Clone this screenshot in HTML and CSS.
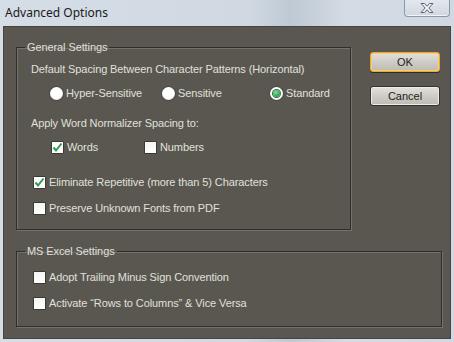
FILE: index.html
```html
<!DOCTYPE html>
<html lang="en">

<head>
    <meta charset="UTF-8">
    <title>Advanced Options</title>
    <link rel="stylesheet" href="styles.css">
</head>

<body>
    <div class="window">
        <div class="titlebar">
            <span class="title">Advanced Options</span>
            <div class="close">
                <svg width="16" height="12" viewBox="0 0 16 12">
                    <path d="M2 1.5h3.5L8 4.3l2.5-2.8H14L9.8 6 14 10.5h-3.5L8 7.7l-2.5 2.8H2L6.2 6z"
                        fill="#f4f6f8" stroke="#5d6670" stroke-width="1" stroke-linejoin="round" />
                </svg>
            </div>
        </div>
        <div class="content">
            <div class="top">
                <fieldset class="group general">
                    <legend>General Settings</legend>
                    <div class="row">Default Spacing Between Character Patterns (Horizontal)</div>
                    <div class="row options r2">
                        <label class="option hyper"><span class="radio"></span>Hyper-Sensitive</label>
                        <label class="option sens"><span class="radio"></span>Sensitive</label>
                        <label class="option"><span class="radio on"></span>Standard</label>
                    </div>
                    <div class="row r3">Apply Word Normalizer Spacing to:</div>
                    <div class="row options boxes r4">
                        <label class="option words"><span class="check on"></span>Words</label>
                        <label class="option"><span class="check"></span>Numbers</label>
                    </div>
                    <div class="row item r5"><span class="check on"></span>Eliminate Repetitive (more than 5) Characters</div>
                    <div class="row item r6"><span class="check"></span>Preserve Unknown Fonts from PDF</div>
                </fieldset>
                <div class="buttons">
                    <button class="btn default">OK</button>
                    <button class="btn">Cancel</button>
                </div>
            </div>
            <fieldset class="group excel">
                <legend>MS Excel Settings</legend>
                <div class="row item"><span class="check"></span>Adopt Trailing Minus Sign Convention</div>
                <div class="row item x2"><span class="check"></span>Activate “Rows to Columns” &amp; Vice Versa</div>
            </fieldset>
        </div>
    </div>
</body>

</html>
```

FILE: styles.css
```css
* {
    margin: 0;
    padding: 0;
    box-sizing: border-box;
}

body {
    width: 454px;
    height: 342px;
    overflow: hidden;
    font-family: "Liberation Sans", Arial, sans-serif;
    font-size: 11px;
    letter-spacing: -0.1px;
}

.window {
    width: 454px;
    height: 342px;
    padding: 0 3px 3px;
    background: linear-gradient(to right, #d5dde6 0%, #d0d9e2 55%, #bfc9d3 64%, #d3dbe4 76%, #d0d9e2 100%);
    display: flex;
    flex-direction: column;
}

.titlebar {
    height: 26px;
    display: flex;
    align-items: flex-start;
    justify-content: space-between;
}

.title {
    font-family: "Noto Sans", sans-serif;
    font-size: 12px;
    letter-spacing: 0;
    color: #1a1a1a;
    margin: 4px 0 0 2px;
}

.close {
    width: 46px;
    height: 17px;
    margin-right: 1px;
    border: 1px solid #8d98a5;
    border-top: none;
    border-radius: 0 0 4px 4px;
    background: linear-gradient(#e3e8ee, #cfd7e0);
    box-shadow: inset 0 -1px 0 #f2f5f8;
    display: flex;
    align-items: center;
    justify-content: center;
}

.content {
    flex: 1;
    border: 1px solid #46453f;
    background: #59574f;
    color: #e0e0dc;
    padding-top: 13px;
}

.top {
    display: flex;
    align-items: flex-start;
}

.group {
    border: 1px solid #2f2e2a;
    box-shadow: 1px 1px 0 #737169, inset 1px 1px 0 #737169;
    margin-left: 12px;
    padding: 7px 0 13px 14px;
}

.group legend {
    margin-left: -6px;
    padding: 0 2px;
    line-height: 14px;
}

.general {
    width: 335px;
}

.excel {
    width: 426px;
    margin-top: 14px;
    padding-top: 11px;
    padding-bottom: 15px;
}

.row {
    display: flex;
    align-items: center;
    height: 16px;
    white-space: nowrap;
}

.r2 { margin-top: 8px; }
.r3 { margin-top: 14px; }
.r4 { margin-top: 8px; }
.r5 { margin-top: 19px; }
.r6 { margin-top: 10px; }
.x2 { margin-top: 10px; }

.options {
    padding-left: 19px;
}

.boxes {
    padding-left: 20px;
}

.option {
    display: flex;
    align-items: center;
    gap: 3px;
}

.hyper { width: 112px; }
.sens { width: 108px; }
.words { width: 93px; }

.item {
    padding-left: 2px;
    gap: 3px;
}

.radio {
    width: 13px;
    height: 13px;
    border-radius: 50%;
    background: radial-gradient(circle at 45% 40%, #ffffff 55%, #d8d8d4 100%);
    box-shadow: 0 0 0 1px #4a4944;
    display: flex;
    align-items: center;
    justify-content: center;
}

.radio.on::after {
    content: "";
    width: 7px;
    height: 7px;
    border-radius: 50%;
    background: radial-gradient(circle at 40% 35%, #7fe09a, #2c9a4a 70%);
    box-shadow: 0 0 0 1px #2f6e3e;
}

.check {
    width: 13px;
    height: 13px;
    background: linear-gradient(#f4f4f2, #ffffff);
    border: 1px solid #3a3934;
    border-radius: 1px;
}

.check.on {
    background: no-repeat center / 11px 11px url("data:image/svg+xml,%3Csvg xmlns='http://www.w3.org/2000/svg' viewBox='0 0 11 11'%3E%3Cpath d='M1.5 5.5l2.5 3 5.5-7' fill='none' stroke='%232f9a4e' stroke-width='2'/%3E%3C/svg%3E"), #ffffff;
}

.buttons {
    margin: 12px 0 0 19px;
    display: flex;
    flex-direction: column;
    gap: 14px;
}

.btn {
    width: 70px;
    height: 20px;
    font-family: "Liberation Sans", Arial, sans-serif;
    font-size: 11px;
    color: #1e1e1e;
    border: 1px solid #34332f;
    border-radius: 3px;
    background: linear-gradient(#e3e1dc, #cfccc5 50%, #bebbb3);
    box-shadow: inset 0 0 0 1px #eeece8;
}

.btn.default {
    border-color: #e9a83a;
    box-shadow: inset 0 0 0 1px #f6cd76, 0 1px 0 #2e2d29;
}
```
